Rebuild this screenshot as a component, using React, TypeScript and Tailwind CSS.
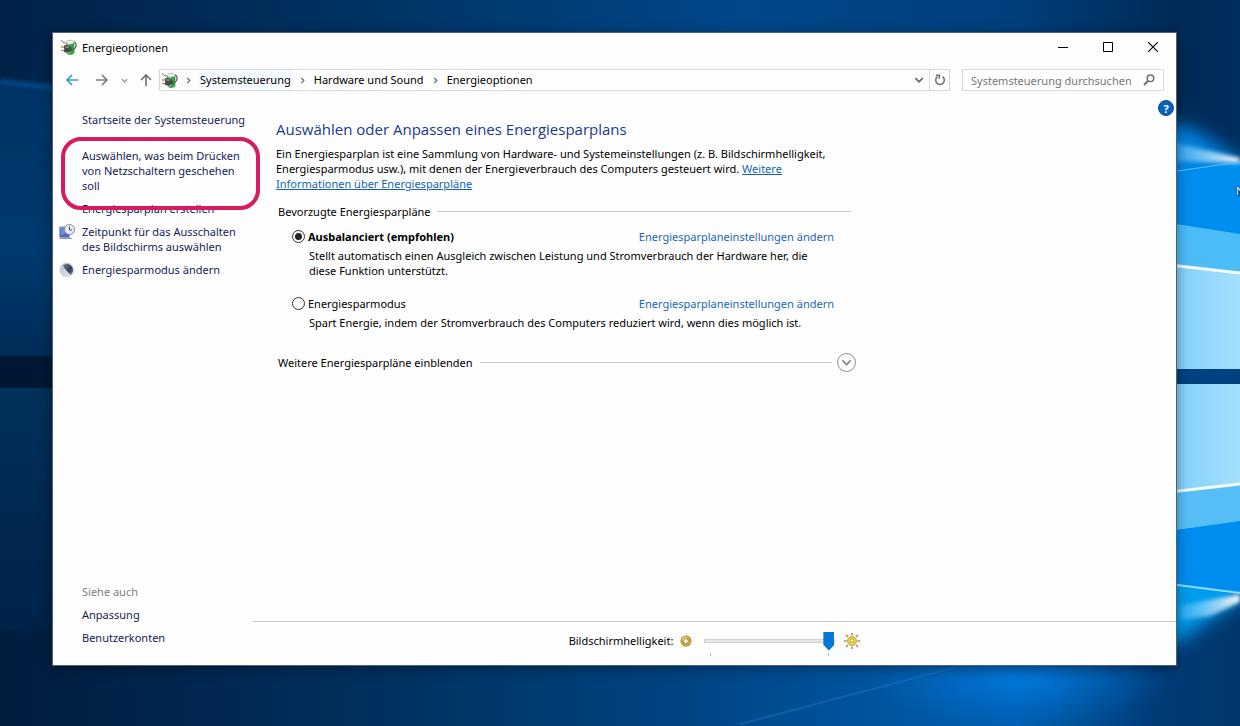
import { useState } from "react"
import type { ReactNode } from "react"

const plans = [
  {
    id: "balanced",
    name: "Ausbalanciert (empfohlen)",
    description:
      "Stellt automatisch einen Ausgleich zwischen Leistung und Stromverbrauch der Hardware her, die diese Funktion unterstützt.",
  },
  {
    id: "saver",
    name: "Energiesparmodus",
    description: "Spart Energie, indem der Stromverbrauch des Computers reduziert wird, wenn dies möglich ist.",
  },
]

const breadcrumbs = ["Systemsteuerung", "Hardware und Sound", "Energieoptionen"]

function PowerIcon() {
  return (
    <svg className="w-4 h-4 shrink-0" viewBox="0 0 16 16" fill="none">
      <path d="M5.5 4L13 3.500v10.500c-1 1.500-5 2-7 .5z" fill="#35a845" stroke="#2c6e38" strokeWidth="0.6" />
      <path d="M6 5l3-.2v9.400H6.500z" fill="#86dd84" />
      <path d="M5.300 3.500C6 1 12 .5 13 2.500v1.600c-1.500 1.400-6 1.500-7.700.4z" fill="#eef3f0" stroke="#86958c" strokeWidth="0.6" />
      <path d="M0.500 1c.5 2 2 3 4.500 3" stroke="#5d6663" strokeWidth="0.9" />
      <path d="M13 3c3 .5 2.800 6-.5 7.500l-2.500.5" stroke="#3a5240" strokeWidth="1.100" />
      <path d="M0 8h4M0 11.500h4" stroke="#c8963a" strokeWidth="1.400" />
      <path d="M3.500 6.500h3.500c2 .5 3.200 1.500 3.200 3.500S8.500 13 7 13H3.500z" fill="#454d4a" stroke="#232a27" strokeWidth="0.5" />
      <path d="M4.500 8h3.500" stroke="#b6bfba" />
    </svg>
  )
}

function ScreenTimerIcon() {
  return (
    <svg className="w-4 h-4" viewBox="0 0 16 16" fill="none">
      <path d="M0.500 3h10v10.500h-10z" fill="#5368c2" stroke="#9aa4cc" />
      <path d="M1.500 4h5v5.500l-5 2z" fill="#7488dc" />
      <path d="M1 14.500h12" stroke="#8e97ad" />
      <circle cx="10.500" cy="5.500" r="5" fill="#e9eef4" stroke="#7f8998" />
      <path d="M10.500 2.500v3.500h2.500" stroke="#3f495a" />
    </svg>
  )
}

function MoonIcon() {
  return (
    <svg className="w-4 h-4" viewBox="0 0 16 16">
      <defs>
        <linearGradient id="moonRim" x1="0" x2="1" y1="0" y2="1">
          <stop offset="0" stopColor="#b9c0cb" />
          <stop offset="1" stopColor="#e8ebef" />
        </linearGradient>
        <linearGradient id="moonShade" x1="0" x2="1" y1="0" y2="1">
          <stop offset="0" stopColor="#6b7d98" />
          <stop offset="0.600" stopColor="#2f3f5a" />
          <stop offset="1" stopColor="#8593a8" />
        </linearGradient>
      </defs>
      <circle cx="8" cy="8" r="7.500" fill="url(#moonRim)" />
      <path d="M4 3.500C7 0.500 13 2 14 7c.5 3-1 5-2.500 6C10 11 5.500 7 4 3.500z" fill="url(#moonShade)" />
    </svg>
  )
}

function Chevron({ className }: { className: string }) {
  return (
    <svg className={className} viewBox="0 0 8 8" fill="none" stroke="currentColor" strokeWidth="1.400">
      <path d="M1 2.500l3 3 3-3" />
    </svg>
  )
}

function Wallpaper() {
  return (
    <svg
      className="absolute inset-0 w-full h-full"
      viewBox="0 0 1240 726"
      preserveAspectRatio="none"
      aria-hidden="true"
    >
      <defs>
        <linearGradient id="top" x1="0" x2="1" y1="0" y2="0">
          <stop offset="0" stopColor="#002247" />
          <stop offset="0.250" stopColor="#00305f" />
          <stop offset="0.600" stopColor="#00488a" />
          <stop offset="0.820" stopColor="#003f7c" />
          <stop offset="0.950" stopColor="#002a57" />
          <stop offset="1" stopColor="#002e5e" />
        </linearGradient>
        <linearGradient id="bottom" x1="0" x2="1" y1="0" y2="0">
          <stop offset="0" stopColor="#001d3e" />
          <stop offset="0.300" stopColor="#00305e" />
          <stop offset="0.550" stopColor="#004482" />
          <stop offset="0.820" stopColor="#0060b4" />
          <stop offset="0.930" stopColor="#003c78" />
          <stop offset="1" stopColor="#00376c" />
        </linearGradient>
        <radialGradient id="floorLight">
          <stop offset="0" stopColor="#0078d8" />
          <stop offset="1" stopColor="#0068c0" stopOpacity="0" />
        </radialGradient>
        <linearGradient id="leftUpper" x1="0" x2="0" y1="0" y2="1">
          <stop offset="0" stopColor="#003265" />
          <stop offset="0.600" stopColor="#003a70" />
          <stop offset="1" stopColor="#002c58" />
        </linearGradient>
        <linearGradient id="leftLower" x1="0" x2="0" y1="0" y2="1">
          <stop offset="0" stopColor="#003159" />
          <stop offset="1" stopColor="#002248" />
        </linearGradient>
        <linearGradient id="pane" x1="0" x2="1" y1="0" y2="0">
          <stop offset="0" stopColor="#7fd0fb" />
          <stop offset="1" stopColor="#a4dffd" />
        </linearGradient>
        <linearGradient id="ray" x1="0" x2="1" y1="0" y2="0">
          <stop offset="0" stopColor="#7fd4ff" stopOpacity="0.300" />
          <stop offset="1" stopColor="#ffffff" />
        </linearGradient>
        <filter id="soft" x="-20%" y="-50%" width="140%" height="200%">
          <feGaussianBlur stdDeviation="2" />
        </filter>
        <filter id="haze" x="-50%" y="-50%" width="200%" height="200%">
          <feGaussianBlur stdDeviation="9" />
        </filter>
      </defs>

      <rect width="1240" height="363" fill="url(#top)" />
      <rect y="363" width="1240" height="363" fill="url(#bottom)" />
      <ellipse cx="1020" cy="682" rx="150" ry="45" fill="url(#floorLight)" />
      <path d="M740 724l220-58" stroke="#1a74c4" strokeOpacity="0.500" strokeWidth="2" />

      {/* Left edge */}
      <path d="M0 81l60 7v270H0z" fill="url(#leftUpper)" />
      <path d="M0 81l60 7" stroke="#0a5aa5" strokeWidth="3" filter="url(#soft)" />
      <rect y="388" width="60" height="242" fill="url(#leftLower)" />
      <rect y="356" width="60" height="32" fill="#001733" />

      {/* Lit window on the right */}
      <path d="M1150 118l45 12 45 30v60h-90z" fill="#0084e4" filter="url(#haze)" />
      <path d="M1150 560h90v40l-35 22-30 22h-25z" fill="#009cf0" filter="url(#haze)" />
      <path d="M1170 172l70-10v75h-70z" fill="#008df0" />
      <path d="M1170 142l70 16v5l-70-2z" fill="url(#ray)" filter="url(#soft)" />
      <path d="M1170 172l70-10" stroke="#59c4ff" />
      <path d="M1170 223l70 11v40h-70z" fill="#4cbcf7" />
      <path d="M1170 266l70 7v97h-70z" fill="url(#pane)" />
      <path d="M1170 265l70 8" stroke="#f4fcff" strokeWidth="3" />
      <rect x="1170" y="369" width="70" height="15" fill="#00427f" />
      <path d="M1170 384h70v101l-70 7z" fill="url(#pane)" />
      <path d="M1170 492l70-7v37l-70 9z" fill="#56bff8" />
      <path d="M1170 492l70-8" stroke="#f4fcff" strokeWidth="3" />
      <path d="M1170 531l70-10v72l-70-8z" fill="#008df0" />
      <path d="M1180 606l60-12v8l-30 14-30 4z" fill="url(#ray)" filter="url(#soft)" />
      <path d="M1170 584l70 9" stroke="#8fdcff" strokeWidth="2" />
    </svg>
  )
}

function SidebarLink({ icon, highlighted, children }: { icon?: ReactNode; highlighted?: boolean; children: ReactNode }) {
  return (
    <li className="relative flex items-start">
      <span className="w-[23px] shrink-0">{icon}</span>
      <a href="#" className="whitespace-nowrap text-[#151c55] hover:underline">
        {children}
      </a>
      {highlighted && (
        <span className="absolute -top-[11px] -bottom-[17px] left-[2px] -right-4 border-4 border-[#d81b60] rounded-[20px] pointer-events-none z-10" />
      )}
    </li>
  )
}

function TitleBar() {
  return (
    <header className="flex items-center h-7 pl-2">
      <PowerIcon />
      <h1 className="ml-[5px] flex-1">Energieoptionen</h1>
      <button aria-label="Minimieren" className="w-[45px] h-full flex items-center justify-center">
        <svg className="w-[10px] h-[10px]" viewBox="0 0 10 10" stroke="#000">
          <path d="M0 5.500h10" />
        </svg>
      </button>
      <button aria-label="Maximieren" className="w-[45px] h-full flex items-center justify-center">
        <svg className="w-[10px] h-[10px]" viewBox="0 0 10 10" fill="none" stroke="#000">
          <path d="M0.500 0.500h9v9h-9z" />
        </svg>
      </button>
      <button aria-label="Schließen" className="w-[46px] h-full flex items-center justify-center">
        <svg className="w-[10px] h-[10px]" viewBox="0 0 10 10" stroke="#000" strokeWidth="1.100">
          <path d="M0 0l10 10M10 0L0 10" />
        </svg>
      </button>
    </header>
  )
}

function NavigationBar() {
  return (
    <nav className="flex items-center pl-3 pr-3 pt-2">
      <button aria-label="Zurück" className="w-[14px]">
        <svg className="w-[14px] h-3" viewBox="0 0 14 12" fill="none" stroke="#3f95d6" strokeWidth="1.700">
          <path d="M13 6H2M7 1L2 6l5 5" />
        </svg>
      </button>
      <button aria-label="Vorwärts" className="w-[14px] ml-4">
        <svg className="w-[14px] h-3" viewBox="0 0 14 12" fill="none" stroke="#7d7d7d" strokeWidth="1.700">
          <path d="M1 6h11M7 1l5 5-5 5" />
        </svg>
      </button>
      <button aria-label="Zuletzt besuchte Seiten" className="ml-3 text-[#8a8a8a]">
        <Chevron className="w-[7px] h-[7px]" />
      </button>
      <button aria-label="Nach oben" className="ml-3 w-3">
        <svg className="w-3 h-[14px]" viewBox="0 0 12 14" fill="none" stroke="#707070" strokeWidth="1.600">
          <path d="M6 13V2M1 7l5-5 5 5" />
        </svg>
      </button>

      <div className="flex flex-1 items-center h-[22px] ml-[7px] border border-[#d9d9d9]">
        <span className="ml-[2px] flex">
          <PowerIcon />
        </span>
        <ol className="flex flex-1 items-center">
          {breadcrumbs.map((crumb, index) => (
            <li key={crumb} className="flex items-center">
              <span className="w-[21px] flex justify-center text-[#666]">
                <Chevron className="w-[7px] h-[7px] -rotate-90" />
              </span>
              <a href="#" className={index === 0 ? "bg-[#f3f9fe] px-px leading-5" : "px-px leading-5"}>
                {crumb}
              </a>
            </li>
          ))}
        </ol>
        <button aria-label="Vorherige Orte" className="w-5 flex justify-center text-[#6a6a6a]">
          <Chevron className="w-[10px] h-[10px]" />
        </button>
        <button
          aria-label="Aktualisieren"
          className="w-5 h-full flex items-center justify-center border-l border-[#d9d9d9]"
        >
          <svg className="w-3 h-3" viewBox="0 0 12 12" fill="none" stroke="#707070" strokeWidth="1.500">
            <path d="M8.500 2.600a4.300 4.300 0 1 1-5 0" />
            <path d="M2 1.300h3.300v3.400" />
          </svg>
        </button>
      </div>

      <div className="flex items-center w-[202px] h-[22px] ml-3 pl-2 pr-2 border border-[#d9d9d9]">
        <input
          type="search"
          aria-label="Systemsteuerung durchsuchen"
          placeholder="Systemsteuerung durchsuchen"
          className="flex-1 min-w-0 outline-none placeholder:text-[#767676]"
        />
        <svg className="w-3 h-3 shrink-0" viewBox="0 0 12 12" fill="none" stroke="#707070" strokeWidth="1.500">
          <circle cx="7.500" cy="4.300" r="3.300" />
          <path d="M5.200 6.800L1 11" strokeWidth="2" />
        </svg>
      </div>
    </nav>
  )
}

function Sidebar() {
  return (
    <aside className="w-[200px] shrink-0 flex flex-col justify-between pt-[21px] pb-5 pl-[6px] pr-[9px]">
      <div>
        <a href="#" className="block pl-[23px] whitespace-nowrap text-[#151c55]">
          Startseite der Systemsteuerung
        </a>
        <ul className="mt-[21px] space-y-2">
          <SidebarLink highlighted>
            Auswählen, was beim Drücken
            <br />
            von Netzschaltern geschehen
            <br />
            soll
          </SidebarLink>
          <SidebarLink>Energiesparplan erstellen</SidebarLink>
          <SidebarLink icon={<ScreenTimerIcon />}>
            Zeitpunkt für das Ausschalten
            <br />
            des Bildschirms auswählen
          </SidebarLink>
          <SidebarLink icon={<MoonIcon />}>Energiesparmodus ändern</SidebarLink>
        </ul>
      </div>
      <div>
        <h2 className="pl-[23px] text-[#808080]">Siehe auch</h2>
        <ul className="mt-2 space-y-2">
          <SidebarLink>Anpassung</SidebarLink>
          <SidebarLink>Benutzerkonten</SidebarLink>
        </ul>
      </div>
    </aside>
  )
}

function BrightnessBar() {
  const [brightness, setBrightness] = useState(100)

  return (
    <footer className="flex items-center justify-center h-11 pb-[6px] border-t border-[#c8c8c8]">
      <label htmlFor="brightness" className="whitespace-nowrap">
        Bildschirmhelligkeit:
      </label>
      <svg className="w-3 h-3 ml-[7px]" viewBox="0 0 12 12" fill="none">
        <circle cx="6" cy="6" r="3.700" stroke="#a07c2c" strokeWidth="3.600" />
        <circle cx="6" cy="6" r="3.700" stroke="#cfa445" strokeWidth="2.600" />
        <path d="M2.500 5a3.700 3.700 0 0 1 4-2.500" stroke="#f1dc92" strokeWidth="1.200" />
      </svg>
      <div className="relative ml-3 w-[131px] h-6 flex items-center">
        <input
          id="brightness"
          type="range"
          min={0}
          max={100}
          value={brightness}
          onChange={(e) => setBrightness(Number(e.target.value))}
          className="w-full h-5 appearance-none bg-transparent [&::-webkit-slider-runnable-track]:h-1 [&::-webkit-slider-runnable-track]:border [&::-webkit-slider-runnable-track]:border-[#d2d2d2] [&::-webkit-slider-runnable-track]:bg-[#e7e7e7] [&::-webkit-slider-thumb]:appearance-none [&::-webkit-slider-thumb]:w-[11px] [&::-webkit-slider-thumb]:h-[19px] [&::-webkit-slider-thumb]:-mt-[8px] [&::-webkit-slider-thumb]:bg-[#0078d7] [&::-webkit-slider-thumb]:[clip-path:polygon(0_0,100%_0,100%_70%,50%_100%,0_70%)]"
        />
        <span className="absolute left-[6px] top-6 w-px h-[3px] bg-[#b5b5b5]" />
        <span className="absolute right-[6px] top-6 w-px h-[3px] bg-[#b5b5b5]" />
      </div>
      <svg className="w-4 h-4 ml-[9px]" viewBox="0 0 16 16" fill="none">
        <path
          d="M8 0v2.500M8 13.500V16M0 8h2.500M13.500 8H16M2 2l2 2M12 12l2 2M14 2l-2 2M4 12l-2 2"
          stroke="#a88a34"
          strokeWidth="1.500"
        />
        <circle cx="8" cy="8" r="4.500" fill="#e9cf4e" stroke="#b99a30" strokeWidth="0.800" />
        <circle cx="8" cy="7.500" r="1.800" fill="#fdf6cf" stroke="#c4a336" />
      </svg>
    </footer>
  )
}

function PlanSettings() {
  const [activePlan, setActivePlan] = useState("balanced")

  return (
    <div className="w-full max-w-[580px]">
      <h2 className="font-['Open_Sans','Noto_Sans',sans-serif] text-[15px] leading-5 text-[#1b3a8c]">
        Auswählen oder Anpassen eines Energiesparplans
      </h2>
      <p className="mt-[7px]">
        Ein Energiesparplan ist eine Sammlung von Hardware- und Systemeinstellungen (z. B. Bildschirmhelligkeit,
        Energiesparmodus usw.), mit denen der Energieverbrauch des Computers gesteuert wird.{" "}
        <a href="#" className="text-[#0f66b5] underline">
          Weitere Informationen über Energiesparpläne
        </a>
      </p>

      <fieldset className="mt-[13px] pl-[2px]">
        <div className="flex items-center pr-[5px]">
          <h3>Bevorzugte Energiesparpläne</h3>
          <span className="flex-1 h-px ml-[7px] bg-[#c8c8c8]" />
        </div>
        {plans.map((plan, index) => (
          <div key={plan.id} className={index === 0 ? "mt-[10px] pl-[14px] pr-[22px]" : "mt-[18px] pl-[14px] pr-[22px]"}>
            <div className="flex items-center">
              <input
                id={plan.id}
                type="radio"
                name="plan"
                checked={activePlan === plan.id}
                onChange={() => setActivePlan(plan.id)}
                className="w-[13px] h-[13px] shrink-0 appearance-none rounded-full border border-[#333] flex items-center justify-center checked:before:block checked:before:w-[7px] checked:before:h-[7px] checked:before:rounded-full checked:before:bg-[#222]"
              />
              <label htmlFor={plan.id} className={activePlan === plan.id ? "ml-[3px] flex-1 font-bold" : "ml-[3px] flex-1"}>
                {plan.name}
              </label>
              <a href="#" className="text-[#1a66b8] hover:underline">
                Energiesparplaneinstellungen ändern
              </a>
            </div>
            <p className="mt-1 pl-[17px]">{plan.description}</p>
          </div>
        ))}
      </fieldset>

      <div className="flex items-center mt-[23px] pl-[2px]">
        <span id="more-plans">Weitere Energiesparpläne einblenden</span>
        <span className="flex-1 h-px ml-[7px] mr-[5px] bg-[#c8c8c8]" />
        <button
          aria-labelledby="more-plans"
          className="w-[19px] h-[19px] flex items-center justify-center rounded-full border border-[#8c8c8c] text-[#8c8c8c]"
        >
          <Chevron className="w-[11px] h-[11px]" />
        </button>
      </div>
    </div>
  )
}

export default function App() {
  return (
    <div className="relative min-h-screen overflow-hidden flex pt-8 pl-[52px] pr-[63px] pb-[60px] bg-[#002a55] font-['Noto_Sans','Open_Sans',sans-serif] text-[11px] leading-[15px] text-black">
      <Wallpaper />
      {/* Desktop shortcut label that runs off the screen */}
      <span className="absolute left-[1236px] top-[183px] text-white [text-shadow:0_0_2px_#000,1px_1px_1px_#000]">N</span>

      <div className="relative flex-1 flex flex-col bg-[#fefefe] border border-[#4d6272] shadow-[0_2px_12px_rgba(0,0,0,0.4)]">
        <TitleBar />
        <NavigationBar />
        <div className="flex-1 flex">
          <Sidebar />
          <div className="flex-1 flex flex-col justify-between">
            <main className="flex items-start justify-between pl-[23px] pt-[9px] pr-[2px]">
              <div className="flex-1 pt-[19px]">
                <PlanSettings />
              </div>
              <button
                aria-label="Hilfe"
                className="w-4 h-4 shrink-0 rounded-full bg-[#0b63b8] border border-[#084f96] text-white font-bold flex items-center justify-center"
              >
                ?
              </button>
            </main>
            <BrightnessBar />
          </div>
        </div>
      </div>
    </div>
  )
}
